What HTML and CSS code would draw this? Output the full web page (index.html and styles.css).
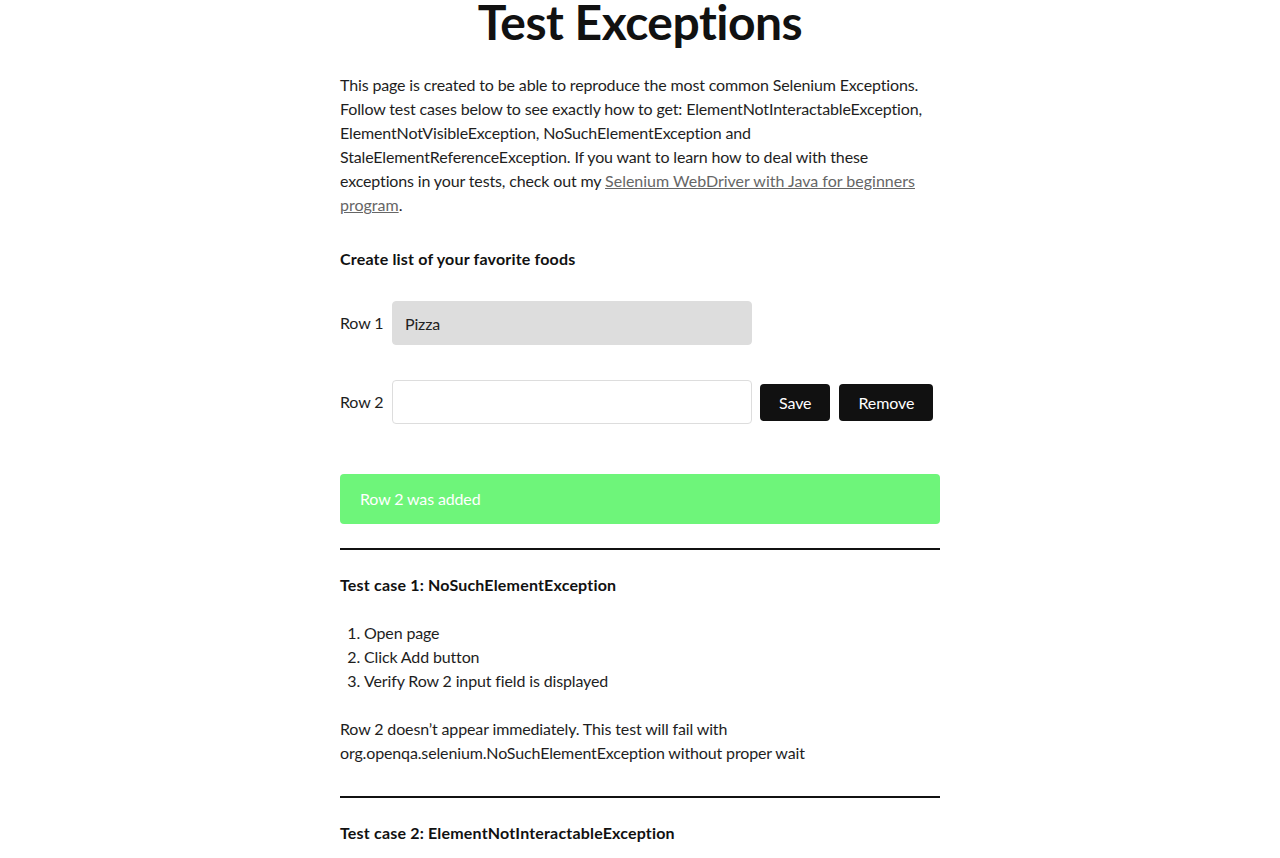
FILE: index.html
```html
<!DOCTYPE html>
<html lang="en">
<head>
<meta charset="utf-8">
<title>Test Exceptions</title>
<link rel="stylesheet" href="styles.css">
</head>
<body>
<main class="page">
  <h1 class="title">Test Exceptions</h1>
  <p class="intro">This page is created to be able to reproduce the most common Selenium Exceptions. Follow test cases below to see exactly how to get: ElementNotInteractableException, ElementNotVisibleException, NoSuchElementException and StaleElementReferenceException. If you want to learn how to deal with these exceptions in your tests, check out my <a class="link" href="#">Selenium WebDriver with Java for beginners program</a>.</p>

  <h2 class="subhead">Create list of your favorite foods</h2>

  <div class="rows">
    <div class="row">
      <label class="row-label">Row 1</label>
      <input class="field field-disabled" type="text" value="Pizza" disabled>
    </div>
    <div class="row">
      <label class="row-label">Row 2</label>
      <input class="field" type="text" value="">
      <button class="btn">Save</button>
      <button class="btn">Remove</button>
    </div>
  </div>

  <div class="alert">Row 2 was added</div>

  <hr class="rule">

  <h2 class="subhead">Test case 1: NoSuchElementException</h2>
  <ol class="steps">
    <li>Open page</li>
    <li>Click Add button</li>
    <li>Verify Row 2 input field is displayed</li>
  </ol>
  <p class="note">Row 2 doesn’t appear immediately. This test will fail with org.openqa.selenium.NoSuchElementException without proper wait</p>

  <hr class="rule">

  <h2 class="subhead">Test case 2: ElementNotInteractableException</h2>
  <ol class="steps">
    <li>Open page</li>
    <li>Click Add button</li>
    <li>Wait for the second row to load</li>
  </ol>
</main>
</body>
</html>
```
FILE: styles.css
```css
html, body {
  margin: 0;
  padding: 0;
  background: #fff;
}
body {
  font-family: Lato, "Liberation Sans", sans-serif;
  font-size: 16px;
  line-height: 24px;
  color: #1e1e1e;
  letter-spacing: -0.14px;
  font-variant-ligatures: none;
}
.page {
  width: 600px;
  margin: 0 auto;
}
.title {
  margin: -7px 0 0 0;
  font-size: 48px;
  line-height: 58px;
  font-weight: 700;
  text-align: center;
  color: #111;
  letter-spacing: -0.5px;
}
.intro {
  margin: 22px 0 0 0;
}
.link {
  color: #666;
  text-decoration: underline;
  letter-spacing: 0;
}
.subhead {
  font-size: 16px;
  line-height: 24px;
  font-weight: 700;
  margin: 30px 0 0 0;
  color: #111;
  letter-spacing: 0.18px;
}
.rows {
  margin-top: 30px;
  display: flex;
  flex-direction: column;
  gap: 35px;
}
.row {
  display: flex;
  align-items: center;
}
.row-label {
  width: 52px;
  flex: none;
}
.field {
  box-sizing: border-box;
  width: 360px;
  height: 44px;
  border: 1px solid #ddd;
  border-radius: 4px;
  padding: 0 12px;
  font-family: inherit;
  font-size: 16px;
  letter-spacing: -0.14px;
  color: #222;
  background: #fff;
  margin: 0;
}
.field-disabled {
  background: #ddd;
  border-color: #ddd;
  color: #222;
  -webkit-text-fill-color: #222;
  opacity: 1;
}
.btn {
  box-sizing: border-box;
  height: 37px;
  margin-left: 8px;
  padding: 0 19px;
  border: none;
  border-radius: 4px;
  background: #111;
  color: #fff;
  font-family: inherit;
  font-size: 16px;
  letter-spacing: -0.1px;
}
.btn + .btn {
  margin-left: 9px;
}
.alert {
  margin-top: 50px;
  height: 50px;
  box-sizing: border-box;
  padding: 13px 20px;
  border-radius: 4px;
  background: #6ef57a;
  color: #fff;
}
.rule {
  margin: 24px 0 0 0;
  border: none;
  border-top: 2px solid #111;
  height: 0;
}
.steps {
  margin: 24px 0 0 0;
  padding-left: 24px;
}
.note {
  margin: 24px 0 0 0;
}
.note + .rule {
  margin-top: 31px;
}
.rule + .subhead {
  margin-top: 23px;
}
```
